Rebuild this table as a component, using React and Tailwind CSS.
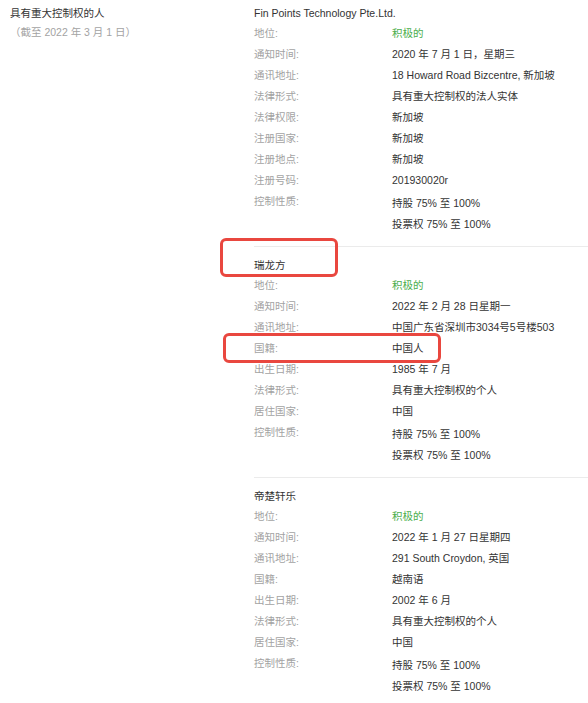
import React from 'react';

const GREEN = 'text-[#4cae4c]';

const sections = [
  {
    name: 'Fin Points Technology Pte.Ltd.',
    rows: [
      ['地位:', '积极的', true],
      ['通知时间:', '2020 年 7 月 1 日，星期三'],
      ['通讯地址:', '18 Howard Road Bizcentre, 新加坡'],
      ['法律形式:', '具有重大控制权的法人实体'],
      ['法律权限:', '新加坡'],
      ['注册国家:', '新加坡'],
      ['注册地点:', '新加坡'],
      ['注册号码:', '201930020r'],
    ],
  },
  {
    name: '瑞龙方',
    rows: [
      ['地位:', '积极的', true],
      ['通知时间:', '2022 年 2 月 28 日星期一'],
      ['通讯地址:', '中国广东省深圳市3034号5号楼503'],
      ['国籍:', '中国人'],
      ['出生日期:', '1985 年 7 月'],
      ['法律形式:', '具有重大控制权的个人'],
      ['居住国家:', '中国'],
    ],
  },
  {
    name: '帝楚轩乐',
    rows: [
      ['地位:', '积极的', true],
      ['通知时间:', '2022 年 1 月 27 日星期四'],
      ['通讯地址:', '291 South Croydon, 英国'],
      ['国籍:', '越南语'],
      ['出生日期:', '2002 年 6 月'],
      ['法律形式:', '具有重大控制权的个人'],
      ['居住国家:', '中国'],
    ],
  },
];

const Row = ({ label, value, green }) => (
  <div className="flex h-[21px] items-center">
    <div className="w-[138px] text-[#a3a3a3]">{label}</div>
    <div className={green ? GREEN : 'text-[#333]'}>{value}</div>
  </div>
);

const Section = ({ data, first }) => (
  <div className={first ? 'pt-[4px] pb-[11px]' : 'border-t border-[#ebebeb] pt-[9px] pb-[11px]'}>
    <div className="h-[19px] leading-[19px] text-[#333]">{data.name}</div>
    {data.rows.map((r, i) => (
      <Row key={i} label={r[0]} value={r[1]} green={r[2]} />
    ))}
    <div className="flex">
      <div className="w-[138px] leading-[21px] text-[#a3a3a3]">控制性质:</div>
      <div className="pt-[2px] text-[#333]">
        <div className="leading-[21px]">持股 75% 至 100%</div>
        <div className="leading-[21px]">投票权 75% 至 100%</div>
      </div>
    </div>
  </div>
);

export default function App() {
  return (
    <div
      className="relative w-[588px] h-[703px] bg-white text-[10.5px] overflow-hidden"
      style={{ fontFamily: '"Liberation Sans", "Noto Sans CJK SC", sans-serif' }}
    >
      <div className="flex">
        <div className="w-[254px] pl-[10px] pt-[4px]">
          <div className="leading-[19px] text-[#333]">具有重大控制权的人</div>
          <div className="leading-[19px] text-[#a3a3a3]">（截至 2022 年 3 月 1 日）</div>
        </div>
        <div className="flex-1">
          {sections.map((s, i) => (
            <Section key={i} data={s} first={i === 0} />
          ))}
        </div>
      </div>
      <div className="absolute left-[220px] top-[238px] w-[118px] h-[39px] border-[3px] border-[#e9473f] rounded-md" />
      <div className="absolute left-[223px] top-[333px] w-[218px] h-[30px] border-[3px] border-[#e9473f] rounded-md" />
    </div>
  );
}
